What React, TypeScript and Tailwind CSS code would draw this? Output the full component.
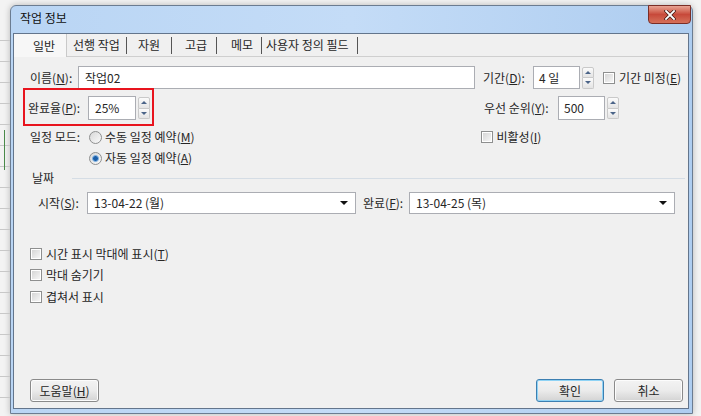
import React from "react";

const FONT = { fontFamily: '"Noto Sans CJK KR", "Noto Sans", sans-serif' };

function U({ c }: { c: string }) {
  return (
    <>
      (<span className="underline underline-offset-[1px]">{c}</span>)
    </>
  );
}

function Spinner() {
  return (
    <div className="flex flex-col w-[12px] h-[22px] gap-0">
      <div className="flex-1 border border-[#c9c9c9] rounded-t-[2px] bg-gradient-to-b from-[#fbfbfb] to-[#e4e4e4] flex items-center justify-center">
        <div className="w-0 h-0 border-l-[3px] border-r-[3px] border-b-[3px] border-l-transparent border-r-transparent border-b-[#4b6488]" />
      </div>
      <div className="flex-1 border border-t-0 border-[#c9c9c9] rounded-b-[2px] bg-gradient-to-b from-[#fbfbfb] to-[#e4e4e4] flex items-center justify-center">
        <div className="w-0 h-0 border-l-[3px] border-r-[3px] border-t-[3px] border-l-transparent border-r-transparent border-t-[#4b6488]" />
      </div>
    </div>
  );
}

function Check() {
  return (
    <div className="w-[12px] h-[12px] border border-[#8e8f8f] bg-white p-[1px] shrink-0">
      <div className="w-full h-full bg-gradient-to-br from-[#d6d6d6] to-[#f6f6f6]" />
    </div>
  );
}

function Radio({ checked }: { checked?: boolean }) {
  return (
    <div className="w-[13px] h-[13px] rounded-full border border-[#8e8f8f] bg-gradient-to-br from-[#d8d8d8] to-[#fafafa] flex items-center justify-center shrink-0">
      {checked && (
        <div className="w-[7px] h-[7px] rounded-full bg-[#1c5fa8] border border-[#86b9e8]" />
      )}
    </div>
  );
}

function Combo({ w, value }: { w: string; value: string }) {
  return (
    <div
      className={`${w} h-[22px] bg-white border border-[#abadb3] flex items-center justify-between pl-[6px] pr-[7px]`}
    >
      <span className="leading-none text-[12px] text-[#262626]">{value}</span>
      <div className="w-0 h-0 border-l-[4px] border-r-[4px] border-t-[4px] border-l-transparent border-r-transparent border-t-[#111]" />
    </div>
  );
}

function Btn({ label, primary, w }: { label: React.ReactNode; primary?: boolean; w: string }) {
  return (
    <div
      className={`${w} h-[23px] rounded-[3px] border ${
        primary ? "border-[#3c7fb1] shadow-[inset_0_0_0_1px_#8fd3f5]" : "border-[#8a8a8a] shadow-[inset_0_0_0_1px_#fcfcfc]"
      } bg-gradient-to-b from-[#f3f3f3] via-[#ebebeb] to-[#d3d3d3] flex items-center justify-center text-[12px] leading-none text-[#262626]`}
    >
      {label}
    </div>
  );
}

export default function App() {
  return (
    <div className="w-[701px] h-[416px] overflow-hidden bg-[#f3f3f3] relative text-[#262626]" style={FONT}>
      {/* background spreadsheet remnants */}
      <div className="absolute left-0 top-[40px] w-[10px] h-[360px] flex flex-col gap-[20px]">
        {Array.from({ length: 18 }).map((_, i) => (
          <div key={i} className="h-[1px] bg-[#c8c8c8]" />
        ))}
      </div>
      <div className="absolute left-[4px] top-[130px] w-[1px] h-[40px] bg-[#4a8a4a]" />

      {/* window */}
      <div className="ml-[10px] mt-[5px] w-[683px] h-[409px] rounded-t-[6px] border border-[#6b7c91] bg-gradient-to-r from-[#b9d5f4] via-[#c4dcf7] to-[#aecdf0] flex flex-col shadow-[0_0_6px_rgba(0,0,0,0.25)]">
        {/* title bar */}
        <div className="h-[27px] flex items-start justify-between shrink-0">
          <div className="pl-[9px] pt-[6px] text-[12px] leading-none text-[#111]">작업 정보</div>
          <div className="-mt-[1px] mr-[1px] w-[43px] h-[19px] rounded-b-[4px] border border-[#7a2d26] bg-gradient-to-b from-[#e8a394] via-[#c7493a] to-[#d5705a] flex items-center justify-center">
            <svg width="12" height="10" viewBox="0 0 12 10">
              <path d="M2 1 L10 9 M10 1 L2 9" stroke="#3a1410" strokeWidth="3.2" strokeLinecap="square" />
              <path d="M2 1 L10 9 M10 1 L2 9" stroke="#ffffff" strokeWidth="1.8" strokeLinecap="square" />
            </svg>
          </div>
        </div>

        {/* client */}
        <div className="ml-[2px] w-[676px] h-[376px] border border-[#63758c] bg-[#f0f0f0] flex flex-col text-[12px]">
          {/* tab row */}
          <div className="flex h-[23px] shrink-0">
            <div className="w-[53px] h-full bg-[#f7f7f7] border-r border-[#c9c9c9] flex items-center pl-[19px] leading-none">
              일반
            </div>
            <div className="flex-1 flex items-center border-b border-[#cfcfcf] leading-none">
              <div className="w-[60px] flex items-center pl-[6px] justify-between">
                <span>선행 작업</span>
                <div className="w-[1px] h-[17px] bg-[#555]" />
              </div>
              <div className="w-[45px] flex items-center pl-[11px] justify-between">
                <span>자원</span>
                <div className="w-[1px] h-[17px] bg-[#555]" />
              </div>
              <div className="w-[45px] flex items-center pl-[13px] justify-between">
                <span>고급</span>
                <div className="w-[1px] h-[17px] bg-[#555]" />
              </div>
              <div className="w-[45px] flex items-center pl-[14px] justify-between">
                <span>메모</span>
                <div className="w-[1px] h-[17px] bg-[#555]" />
              </div>
              <div className="w-[96px] flex items-center pl-[4px] justify-between">
                <span>사용자 정의 필드</span>
                <div className="w-[1px] h-[17px] bg-[#555]" />
              </div>
            </div>
          </div>

          {/* row 1 */}
          <div className="flex items-center mt-[9px] h-[23px] pl-[16px] leading-none">
            <div className="w-[48px]">
              이름<U c="N" />:
            </div>
            <div className="w-[397px] h-[23px] bg-white border border-[#abadb3] flex items-center pl-[6px]">작업02</div>
            <div className="ml-[8px] w-[50px]">
              기간<U c="D" />:
            </div>
            <div className="w-[47px] h-[23px] bg-white border border-[#abadb3] flex items-center pl-[5px]">4 일</div>
            <div className="ml-[2px]">
              <Spinner />
            </div>
            <div className="ml-[9px] flex items-center gap-[4px]">
              <Check />
              <span>
                기간 미정<U c="E" />
              </span>
            </div>
          </div>

          {/* row 2 */}
          <div className="flex items-center mt-[7px] h-[24px] pl-[14px] leading-none relative">
            <div className="absolute left-[9px] -top-[8px] w-[131px] h-[38px] border-2 border-[#e8141e]" />
            <div className="w-[60px]">
              완료율<U c="P" />:
            </div>
            <div className="w-[48px] h-[24px] bg-white border border-[#abadb3] flex items-center pl-[6px]">25%</div>
            <div className="ml-[2px]">
              <Spinner />
            </div>
            <div className="ml-[334px] w-[74px]">
              우선 순위<U c="Y" />:
            </div>
            <div className="w-[47px] h-[24px] bg-white border border-[#abadb3] flex items-center pl-[5px]">500</div>
            <div className="ml-[2px]">
              <Spinner />
            </div>
          </div>

          {/* row 3 */}
          <div className="flex items-center mt-[7px] h-[20px] pl-[16px] leading-none">
            <div className="w-[59px]">일정 모드:</div>
            <Radio />
            <span className="ml-[3px]">
              수동 일정 예약<U c="M" />
            </span>
            <div className="ml-[286px] flex items-center gap-[4px]">
              <Check />
              <span>
                비활성<U c="I" />
              </span>
            </div>
          </div>

          {/* row 4 */}
          <div className="flex items-center mt-[1px] h-[20px] pl-[75px] leading-none">
            <Radio checked />
            <span className="ml-[3px]">
              자동 일정 예약<U c="A" />
            </span>
          </div>

          {/* 날짜 group */}
          <div className="flex items-center mt-[2px] h-[16px] pl-[18px] pr-[3px] leading-none">
            <span>날짜</span>
            <div className="ml-[18px] flex-1 h-[1px] bg-[#d5dde5]" />
          </div>

          <div className="flex items-center mt-[6px] h-[22px] pl-[24px] leading-none">
            <div className="w-[49px]">
              시작<U c="S" />:
            </div>
            <Combo w="w-[269px]" value="13-04-22 (월)" />
            <div className="ml-[7px] w-[46px]">
              완료<U c="F" />:
            </div>
            <Combo w="w-[266px]" value="13-04-25 (목)" />
          </div>

          {/* checkboxes */}
          <div className="flex flex-col mt-[30px] pl-[16px] leading-none">
            <div className="flex items-center h-[20px] gap-[4px]">
              <Check />
              <span>
                시간 표시 막대에 표시<U c="T" />
              </span>
            </div>
            <div className="flex items-center h-[20px] mt-[1px] gap-[4px]">
              <Check />
              <span>막대 숨기기</span>
            </div>
            <div className="flex items-center h-[20px] mt-[2px] gap-[4px]">
              <Check />
              <span>겹쳐서 표시</span>
            </div>
          </div>

          {/* buttons */}
          <div className="flex items-center mt-[72px] pl-[16px] pr-[5px]">
            <Btn w="w-[69px]" label={<>도움말<U c="H" /></>} />
            <div className="flex-1" />
            <Btn w="w-[68px]" primary label="확인" />
            <div className="w-[10px]" />
            <Btn w="w-[69px]" label="취소" />
          </div>
        </div>
      </div>
    </div>
  );
}
